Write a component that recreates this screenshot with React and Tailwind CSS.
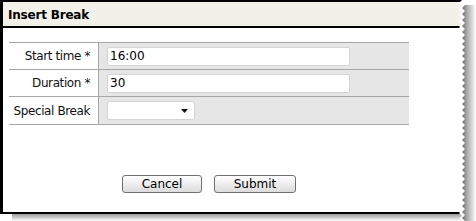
import React from 'react';

const font = { fontFamily: '"DejaVu Sans", Verdana, sans-serif' };

// zigzag torn edge on the right side of the dialog
function TornEdge() {
    const h = 221;
    const pts = [];
    for (let y = 0, i = 0; y <= h; y += 3, i++) {
        pts.push(`${i % 2 ? 3 : 6},${y}`);
    }
    const edge = pts.join(' ');
    const shadow = pts.map(p => {
        const [x, y] = p.split(',').map(Number);
        return `${x + 3},${y + 5}`;
    }).join(' ');
    return (
        <svg className="absolute top-0 left-[456px]" width="20" height={h}>
            <defs>
                <linearGradient id="sh" x1="0" x2="1" y1="0" y2="0">
                    <stop offset="0" stopColor="#6e6e6e" />
                    <stop offset="0.35" stopColor="#a8a8a8" />
                    <stop offset="1" stopColor="#ffffff" />
                </linearGradient>
            </defs>
            <polygon points={`${edge} 20,${h} 20,0`} fill="#ffffff" />
            <polygon points={`${shadow} 20,${h + 5} 20,5`} fill="url(#sh)" />
        </svg>
    );
}

function Row({ label, children, last }) {
    return (
        <div className={`flex h-[27px] ${last ? '' : 'border-b border-[#a6a6a6]'}`}>
            <div className="w-[90px] border-r border-[#a6a6a6] bg-white flex items-center justify-end pr-[8px] text-[12px] tracking-[-0.4px] whitespace-nowrap text-[#111]">
                {label}
            </div>
            <div className="flex-1 bg-[#e6e6e6] flex items-center pl-[8px]">
                {children}
            </div>
        </div>
    );
}

export default function App() {
    return (
        <div className="w-[476px] h-[221px] bg-white relative overflow-hidden" style={font}>
            <div className="w-[463px] h-[214px] border-l-[3px] border-t-2 border-b-2 border-black flex flex-col">
                <div className="h-[26px] bg-[#f1f1ea] border-b-2 border-black flex items-center pl-[5px] pt-[1px]">
                    <span className="text-[12px] font-bold tracking-[-0.2px] text-black">Insert Break</span>
                </div>

                <div className="ml-[6px] mt-[14px] w-[400px] border-t border-b border-[#a6a6a6]">
                    <Row label="Start time *">
                        <div className="w-[243px] h-[19px] bg-white border border-[#d4d4d4] rounded-[2px] flex items-center pl-[2px] text-[12px] text-black">16:00</div>
                    </Row>
                    <Row label="Duration *">
                        <div className="w-[243px] h-[19px] bg-white border border-[#d4d4d4] rounded-[2px] flex items-center pl-[2px] text-[12px] text-black">30</div>
                    </Row>
                    <Row label="Special Break" last>
                        <div className="w-[88px] h-[19px] bg-white border border-[#d4d4d4] rounded-[2px] flex items-center justify-end pr-[6px]">
                            <svg width="7" height="4" viewBox="0 0 7 4"><polygon points="0,0 7,0 3.5,4" fill="#111" /></svg>
                        </div>
                    </Row>
                </div>

                <div className="flex gap-[12px] ml-[119px] mt-[50px]">
                    <button className="w-[80px] h-[18px] border border-[#707070] rounded-[3px] bg-gradient-to-b from-white to-[#dcdcdc] text-[12px] text-black leading-none">Cancel</button>
                    <button className="w-[82px] h-[18px] border border-[#707070] rounded-[3px] bg-gradient-to-b from-white to-[#dcdcdc] text-[12px] text-black leading-none">Submit</button>
                </div>
            </div>
            <div className="ml-[12px] w-[450px] h-[7px] bg-gradient-to-b from-[#9a9a9a] to-white" />
            <TornEdge />
        </div>
    );
}
